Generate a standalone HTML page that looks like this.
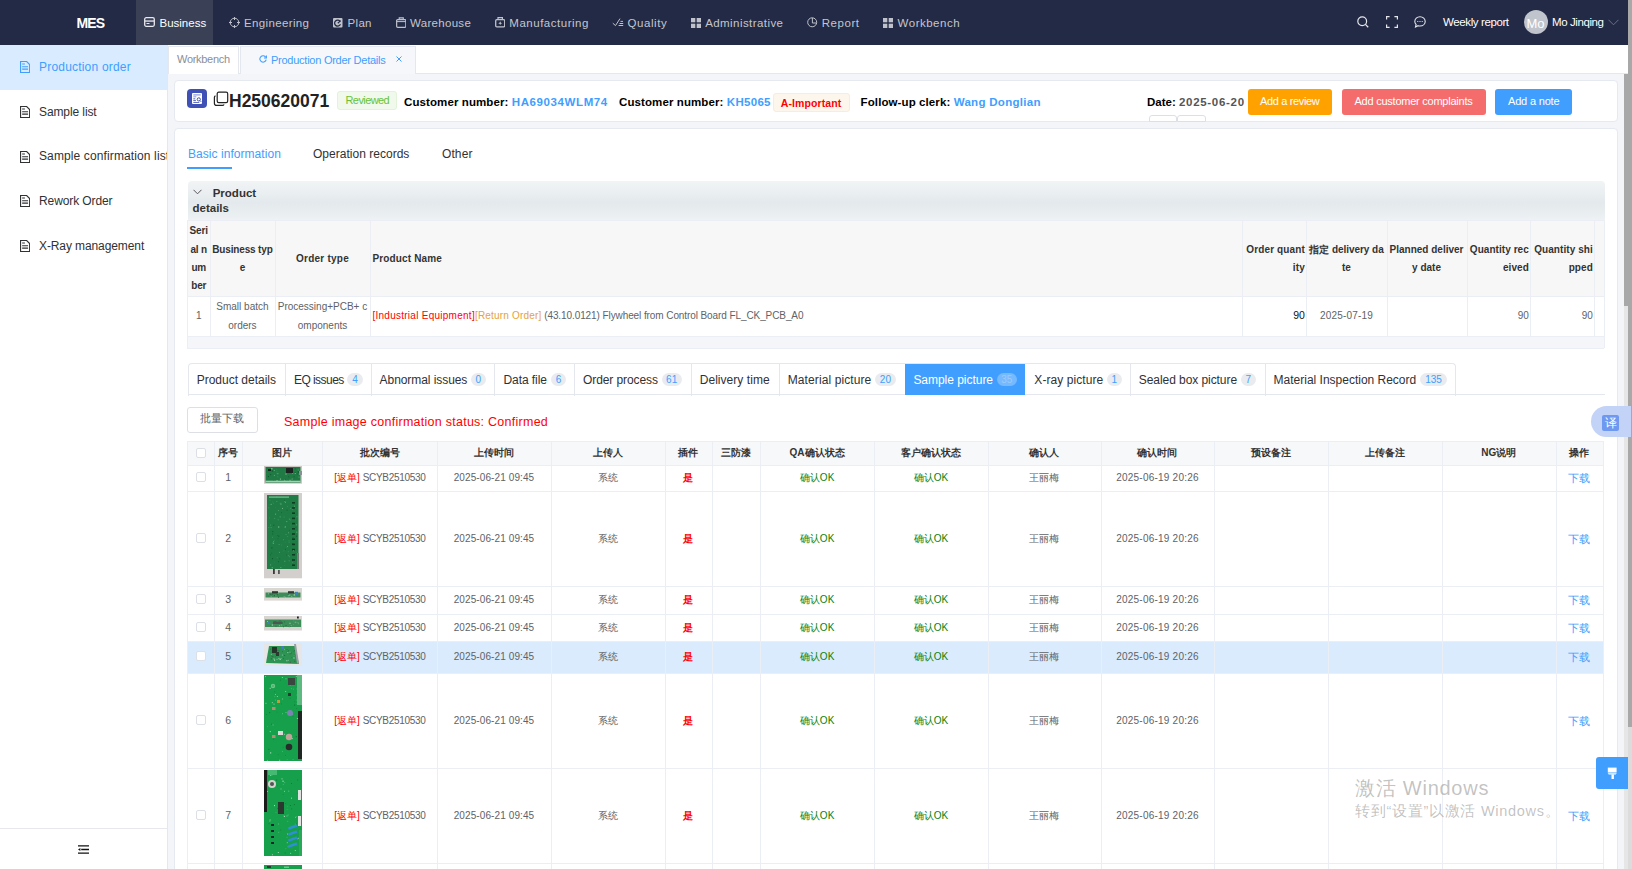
<!DOCTYPE html>
<html><head><meta charset="utf-8">
<style>
*{box-sizing:border-box;margin:0;padding:0}
html,body{width:1632px;height:869px;overflow:hidden;background:#f4f5f8;font-family:"Liberation Sans",sans-serif;color:#303133}
.abs{position:absolute}
.t{position:absolute;white-space:nowrap;line-height:1}
.nav{position:absolute;left:0;top:0;width:1628px;height:45px;background:#232a45}
.nt{position:absolute;top:17.5px;white-space:nowrap;line-height:1;font-size:11.5px;color:#c3c6ce}
.ni{position:absolute;top:17px}
.side{position:absolute;left:0;top:45px;width:168px;height:824px;background:#fff;border-right:1px solid #e4e7ed}
.mi{position:absolute;left:0;width:167px;height:45px;color:#303133;overflow:hidden}
.mi .t{left:39px;top:15.5px;font-size:12px;letter-spacing:-0.1px}
.mi svg{position:absolute;left:20px;top:16px}
.card{position:absolute;background:#fff;border:1px solid #e6e9ef;border-radius:4px}
.blue{color:#409eff}
.b{font-weight:bold}
</style></head><body>

<!-- NAVBAR -->
<div class="nav">
  <div class="abs" style="left:136px;top:0;width:77px;height:45px;background:#3a4157"></div>
  <div class="t" style="left:76.5px;top:16px;font-size:14px;font-weight:bold;color:#fff;letter-spacing:-0.9px">MES</div>
  <!-- Business -->
  <svg class="ni" style="left:144px;top:17px" width="11" height="10" viewBox="0 0 11 10"><rect x="0.7" y="0.7" width="9.6" height="8.6" rx="1.5" fill="none" stroke="#e8e9ee" stroke-width="1.3"/><rect x="1" y="3.4" width="9" height="1.3" fill="#e8e9ee"/><rect x="2.5" y="6" width="3" height="1" fill="#e8e9ee"/></svg>
  <div class="nt" style="left:159.5px;color:#fff;letter-spacing:0px">Business</div>
  <!-- Engineering -->
  <svg class="ni" style="left:229px;top:17px" width="11" height="11" viewBox="0 0 11 11"><circle cx="5.5" cy="5.5" r="4.3" fill="none" stroke="#bfc2cb" stroke-width="1"/><path d="M5.5 0v3M5.5 8v3M0 5.5h3M8 5.5h3" stroke="#bfc2cb" stroke-width="1"/></svg>
  <div class="nt" style="left:244px;letter-spacing:0.36px">Engineering</div>
  <!-- Plan -->
  <svg class="ni" style="left:333px;top:17.5px" width="10" height="10" viewBox="0 0 10 10"><rect x="0" y="0" width="9.5" height="9.5" rx="1" fill="#bfc2cb"/><path d="M7.2 3.6A3 3 0 1 0 7.4 6.2" fill="none" stroke="#232a45" stroke-width="1.3"/><path d="M4.8 5.2L7.6 2.6" stroke="#232a45" stroke-width="1.2"/></svg>
  <div class="nt" style="left:347.5px;letter-spacing:0.33px">Plan</div>
  <!-- Warehouse -->
  <svg class="ni" style="left:395.5px;top:17px" width="10.5" height="11" viewBox="0 0 10.5 11"><rect x="0.65" y="2.6" width="9.2" height="7.7" rx="1" fill="none" stroke="#bfc2cb" stroke-width="1.2"/><path d="M3.2 2.6V0.9h4.1v1.7" fill="none" stroke="#bfc2cb" stroke-width="1.1"/><path d="M0.6 4.6h9.3" stroke="#bfc2cb" stroke-width="1"/></svg>
  <div class="nt" style="left:410px;letter-spacing:0.3px">Warehouse</div>
  <!-- Manufacturing -->
  <svg class="ni" style="left:494.5px;top:17px" width="10.5" height="10.5" viewBox="0 0 10.5 10.5"><rect x="0.7" y="2.7" width="9" height="7.1" rx="1" fill="none" stroke="#bfc2cb" stroke-width="1.3"/><path d="M3 2.6V0.7h4.4v1.9" fill="none" stroke="#bfc2cb" stroke-width="1.2"/><path d="M5.2 4.3L5.9 5.7L7.2 6.2L5.9 6.7L5.2 8.1L4.5 6.7L3.2 6.2L4.5 5.7Z" fill="#bfc2cb"/></svg>
  <div class="nt" style="left:509.3px;letter-spacing:0.52px">Manufacturing</div>
  <!-- Quality -->
  <svg class="ni" style="left:611.5px;top:18px" width="17" height="10" viewBox="0 0 17 10"><path d="M0.8 5.2L3.5 7.6L8 0.6" fill="none" stroke="#bfc2cb" stroke-width="1"/><path d="M8.5 3.4h2.5M7.5 5.5h3.7M6.6 7.5h4.6" stroke="#bfc2cb" stroke-width="1"/></svg>
  <div class="nt" style="left:627.5px;letter-spacing:0.57px">Quality</div>
  <!-- Administrative -->
  <svg class="ni" style="left:691px;top:18px" width="10" height="10" viewBox="0 0 10 10"><rect x="0" y="0" width="4.3" height="4.3" fill="#bfc2cb"/><rect x="5.7" y="0" width="4.3" height="4.3" fill="#bfc2cb"/><rect x="0" y="5.7" width="4.3" height="4.3" fill="#bfc2cb"/><rect x="5.7" y="5.7" width="4.3" height="4.3" fill="#bfc2cb"/></svg>
  <div class="nt" style="left:705.2px;letter-spacing:0.43px">Administrative</div>
  <!-- Report -->
  <svg class="ni" style="left:806.5px;top:17px" width="11" height="11" viewBox="0 0 11 11"><circle cx="5.2" cy="5.3" r="4.5" fill="none" stroke="#bfc2cb" stroke-width="1"/><path d="M5.4 1v5h4" fill="none" stroke="#bfc2cb" stroke-width="1"/></svg>
  <div class="nt" style="left:821.7px;letter-spacing:0.56px">Report</div>
  <!-- Workbench -->
  <svg class="ni" style="left:883px;top:18px" width="10" height="10" viewBox="0 0 10 10"><rect x="0" y="0" width="4.3" height="4.3" fill="#bfc2cb"/><rect x="5.7" y="0" width="4.3" height="4.3" fill="#bfc2cb"/><rect x="0" y="5.7" width="4.3" height="4.3" fill="#bfc2cb"/><rect x="5.7" y="5.7" width="4.3" height="4.3" fill="#bfc2cb"/></svg>
  <div class="nt" style="left:897.6px;letter-spacing:0.5px">Workbench</div>

  <!-- right -->
  <svg class="ni" style="left:1357px;top:16px" width="12" height="12" viewBox="0 0 12 12"><circle cx="5.2" cy="5.2" r="4.4" fill="none" stroke="#e6e7ec" stroke-width="1.2"/><path d="M8.4 8.4L11.2 11.2" stroke="#e6e7ec" stroke-width="1.3"/></svg>
  <svg class="ni" style="left:1385.5px;top:16px" width="12" height="12" viewBox="0 0 12 12"><path d="M0.6 3.5V0.6h3M8.4 0.6h3v2.9M11.4 8.5v2.9h-3M3.6 11.4h-3V8.5" fill="none" stroke="#e6e7ec" stroke-width="1.2"/></svg>
  <svg class="ni" style="left:1414px;top:15.5px" width="12" height="12" viewBox="0 0 12 12"><path d="M6 0.8C3 0.8 0.8 2.9 0.8 5.4c0 1.2 0.5 2.2 1.3 3L1.5 11l2.6-1.3c0.6 0.2 1.2 0.3 1.9 0.3 3 0 5.2-2.1 5.2-4.6S9 0.8 6 0.8z" fill="none" stroke="#e6e7ec" stroke-width="1.1"/><rect x="3.3" y="5" width="1" height="1" fill="#e6e7ec"/><rect x="5.5" y="5" width="1" height="1" fill="#e6e7ec"/><rect x="7.7" y="5" width="1" height="1" fill="#e6e7ec"/></svg>
  <div class="nt" style="top:17px;left:1443px;color:#fff;letter-spacing:-0.39px">Weekly report</div>
  <div class="abs" style="left:1524px;top:10px;width:24px;height:24px;border-radius:50%;background:#c0c4cc"></div>
  <div class="t" style="left:1526.5px;top:16.5px;font-size:13px;color:#fff;letter-spacing:0px">Mo</div>
  <div class="nt" style="top:17px;left:1552px;color:#fff;letter-spacing:-0.4px">Mo Jinqing</div>
  <svg class="ni" style="left:1608px;top:19px" width="11" height="7" viewBox="0 0 11 7"><path d="M0.5 0.8L5.5 5.8L10.5 0.8" fill="none" stroke="#6b7186" stroke-width="1"/></svg>
</div>

<!-- SIDEBAR -->
<div class="side">
  <div class="mi" style="top:0;background:#d9ecff;color:#409eff">
    <svg width="10.2" height="12" viewBox="0 0 11 13"><path d="M0.6 0.6h6.6l3.2 3.2v8.6H0.6z" fill="none" stroke="#409eff" stroke-width="1.2"/><path d="M2.3 3.3h3M2.3 6.3h6.4M2.3 8.8h6.4" stroke="#409eff" stroke-width="1.1"/></svg>
    <div class="t" style="letter-spacing:0.2px">Production order</div></div>
  <div class="mi" style="top:45px">
    <svg width="10.2" height="12" viewBox="0 0 11 13"><path d="M0.6 0.6h6.6l3.2 3.2v8.6H0.6z" fill="none" stroke="#303133" stroke-width="1.2"/><path d="M2.3 3.3h3M2.3 6.3h6.4M2.3 8.8h6.4" stroke="#303133" stroke-width="1.1"/></svg>
    <div class="t">Sample list</div></div>
  <div class="mi" style="top:89.5px">
    <svg width="10.2" height="12" viewBox="0 0 11 13"><path d="M0.6 0.6h6.6l3.2 3.2v8.6H0.6z" fill="none" stroke="#303133" stroke-width="1.2"/><path d="M2.3 3.3h3M2.3 6.3h6.4M2.3 8.8h6.4" stroke="#303133" stroke-width="1.1"/></svg>
    <div class="t" style="letter-spacing:0.12px">Sample confirmation list</div></div>
  <div class="mi" style="top:134px">
    <svg width="10.2" height="12" viewBox="0 0 11 13"><path d="M0.6 0.6h6.6l3.2 3.2v8.6H0.6z" fill="none" stroke="#303133" stroke-width="1.2"/><path d="M2.3 3.3h3M2.3 6.3h6.4M2.3 8.8h6.4" stroke="#303133" stroke-width="1.1"/></svg>
    <div class="t">Rework Order</div></div>
  <div class="mi" style="top:179px">
    <svg width="10.2" height="12" viewBox="0 0 11 13"><path d="M0.6 0.6h6.6l3.2 3.2v8.6H0.6z" fill="none" stroke="#303133" stroke-width="1.2"/><path d="M2.3 3.3h3M2.3 6.3h6.4M2.3 8.8h6.4" stroke="#303133" stroke-width="1.1"/></svg>
    <div class="t">X-Ray management</div></div>
  <div class="abs" style="left:0;top:783px;width:167px;height:1px;background:#e6e8ee"></div>
  <svg class="abs" style="left:78px;top:800px" width="11" height="9" viewBox="0 0 11 9"><path d="M0 0.8h11M3.2 4.5h7.8M0 8.2h11" stroke="#111" stroke-width="1.3"/><path d="M0 4.5L2.4 3v3z" fill="#111"/></svg>
</div>
<!-- TAB STRIP -->
<div class="abs" style="left:168px;top:45px;width:1460px;height:29px;background:#fff;border-bottom:1px solid #e4e7ed"></div>
<div class="abs" style="left:168px;top:46px;width:71px;height:28px;background:#fff;border:1px solid #e4e7ed;border-bottom:none"></div>
<div class="t" style="left:177px;top:54px;font-size:11px;color:#8a8e99;letter-spacing:-0.3px">Workbench</div>
<div class="abs" style="left:240px;top:46px;width:176px;height:28px;background:#f5f7fa;border:1px solid #e4e7ed;border-bottom:none"></div>
<svg class="abs" style="left:259px;top:55px" width="8" height="8" viewBox="0 0 8 8"><path d="M6.8 2.3A3.2 3.2 0 1 0 7.2 4.6" fill="none" stroke="#409eff" stroke-width="1.1"/><path d="M7.4 0.6v2.4H5" fill="none" stroke="#409eff" stroke-width="1.1"/></svg>
<div class="t blue" style="left:271px;top:55px;font-size:11px;letter-spacing:-0.25px">Production Order Details</div>
<svg class="abs" style="left:396px;top:56px" width="6" height="6" viewBox="0 0 6 6"><path d="M0.5 0.5l5 5M5.5 0.5l-5 5" stroke="#409eff" stroke-width="1"/></svg>

<!-- HEADER CARD -->
<div class="card" style="left:174px;top:80px;width:1444px;height:42px"></div>
<div class="abs" style="left:187px;top:89px;width:20px;height:19px;background:#3f51b5;border-radius:4px"></div>
<svg class="abs" style="left:192px;top:93px" width="10" height="11" viewBox="0 0 10 11"><rect x="0" y="0" width="10" height="11" rx="1" fill="#fff"/><rect x="1.3" y="1.3" width="7.4" height="1.2" fill="#8f9ad6"/><rect x="1.3" y="3.4" width="3" height="0.9" fill="#7c88cf"/><rect x="1.3" y="5.4" width="2" height="0.9" fill="#3f51b5"/><rect x="1.3" y="7.2" width="2.6" height="0.9" fill="#3f51b5"/><rect x="1.3" y="9" width="6" height="0.8" fill="#3f51b5"/><circle cx="6.8" cy="6.4" r="1.6" fill="none" stroke="#3f51b5" stroke-width="1"/><path d="M8 7.6l1.2 1.2" stroke="#3f51b5" stroke-width="1"/></svg>
<svg class="abs" style="left:213px;top:90.7px" width="16" height="16" viewBox="0 0 16 16"><rect x="4.2" y="1.2" width="10.5" height="10.5" rx="1.6" fill="none" stroke="#222" stroke-width="1.2"/><path d="M2.5 4.8C1.8 5 1.4 5.6 1.4 6.4v5.8c0 1.3 0.9 2.2 2.2 2.2h5.8c0.8 0 1.4-0.4 1.6-1.1" fill="none" stroke="#222" stroke-width="1.2"/></svg>
<div class="t b" style="left:229px;top:92.7px;font-size:17.5px;color:#222">H250620071</div>
<div class="abs" style="left:337px;top:91px;width:60px;height:18.5px;background:#f0f9eb;border:1px solid #e1f3d8;border-radius:3px"></div>
<div class="t" style="left:345.5px;top:95px;font-size:11px;color:#67c23a;letter-spacing:-0.58px">Reviewed</div>
<div class="t b" style="left:404px;top:96.5px;font-size:11.5px;color:#000;letter-spacing:0.1px">Customer number: <span class="blue" style="letter-spacing:0.6px">HA69034WLM74</span></div>
<div class="t b" style="left:619px;top:96.5px;font-size:11.5px;color:#000;letter-spacing:0.1px">Customer number: <span class="blue" style="letter-spacing:0.3px">KH5065</span></div>
<div class="abs" style="left:772.5px;top:93.3px;width:77px;height:19px;background:#fdf6ec;border:1px solid #faecd8;border-radius:3px"></div>
<div class="t b" style="left:780.8px;top:97.5px;font-size:10.5px;color:#f00;letter-spacing:0.1px">A-Important</div>
<div class="t b" style="left:860.6px;top:96.5px;font-size:11.5px;color:#000;letter-spacing:0.1px">Follow-up clerk: <span class="blue" style="letter-spacing:0.3px">Wang Donglian</span></div>
<div class="t b" style="left:1147px;top:96.7px;font-size:11.5px;color:#000">Date: <span style="color:#555;letter-spacing:0.7px">2025-06-20</span></div>
<div class="abs" style="left:1148.5px;top:115px;width:28px;height:6.5px;border:1px solid #dcdfe6;border-radius:3px 3px 0 0;background:#fff"></div>
<div class="abs" style="left:1176.5px;top:115px;width:29px;height:6.5px;border:1px solid #dcdfe6;border-radius:3px 3px 0 0;background:#fff"></div>

<div class="abs" style="left:1248px;top:89px;width:84px;height:26px;background:#ffa200;border-radius:3px"></div>
<div class="t" style="left:1260px;top:95.5px;font-size:11px;color:#fff;letter-spacing:-0.35px">Add a review</div>
<div class="abs" style="left:1342px;top:89px;width:144px;height:26px;background:#f56c6c;border-radius:3px"></div>
<div class="t" style="left:1354.5px;top:95.5px;font-size:11px;color:#fff;letter-spacing:-0.24px">Add customer complaints</div>
<div class="abs" style="left:1495px;top:89px;width:77px;height:26px;background:#409eff;border-radius:3px"></div>
<div class="t" style="left:1508px;top:95.5px;font-size:11px;color:#fff;letter-spacing:-0.18px">Add a note</div>

<!-- MAIN CARD -->
<div class="card" style="left:174px;top:128px;width:1444px;height:760px"></div>
<div class="t blue" style="left:188px;top:148px;font-size:12px;letter-spacing:0.05px">Basic information</div>
<div class="abs" style="left:187px;top:167px;width:45px;height:2px;background:#409eff"></div>
<div class="t" style="left:313px;top:148px;font-size:12px;letter-spacing:0.02px">Operation records</div>
<div class="t" style="left:442px;top:148px;font-size:12px;letter-spacing:0.1px">Other</div>

<!-- collapse header -->
<div class="abs" style="left:187.5px;top:181px;width:1417px;height:39px;border-radius:4px 4px 0 0;background:linear-gradient(#f0f4f5 0%,#e9eef0 35%,#e3e9ec 55%,#e9eef1 85%,#eff2f5 100%)"></div>
<svg class="abs" style="left:193px;top:189px" width="9" height="6" viewBox="0 0 9 6"><path d="M0.5 0.8L4.5 4.8L8.5 0.8" fill="none" stroke="#555" stroke-width="1"/></svg>
<div class="t b" style="left:212.7px;top:186px;font-size:11.5px;color:#333;line-height:15px">Product</div>
<div class="t b" style="left:192.5px;top:201px;font-size:11.5px;color:#333;line-height:15px">details</div>
<div class="abs" style="left:187.2px;top:220.2px;width:1417.2px;height:75.80000000000001px;background:#f7f7f8"></div>
<div class="abs" style="left:187.2px;top:296px;width:1417.2px;height:40.19999999999999px;background:#fff"></div>
<div class="abs" style="left:187.2px;top:336.2px;width:1417.2px;height:12.300000000000011px;background:#f5f6f9"></div>
<div class="abs" style="left:187.2px;top:220.2px;width:1417.2px;height:1px;background:#ebeef5"></div>
<div class="abs" style="left:187.2px;top:296px;width:1417.2px;height:1px;background:#ebeef5"></div>
<div class="abs" style="left:187.2px;top:336.2px;width:1417.2px;height:1px;background:#ebeef5"></div>
<div class="abs" style="left:187.2px;top:347.5px;width:1417.2px;height:1px;background:#ebeef5"></div>
<div class="abs" style="left:187.2px;top:220.2px;width:1px;height:116.0px;background:#ebeef5"></div>
<div class="abs" style="left:210.3px;top:220.2px;width:1px;height:116.0px;background:#ebeef5"></div>
<div class="abs" style="left:274.6px;top:220.2px;width:1px;height:116.0px;background:#ebeef5"></div>
<div class="abs" style="left:370.4px;top:220.2px;width:1px;height:116.0px;background:#ebeef5"></div>
<div class="abs" style="left:1242.4px;top:220.2px;width:1px;height:116.0px;background:#ebeef5"></div>
<div class="abs" style="left:1306.4px;top:220.2px;width:1px;height:116.0px;background:#ebeef5"></div>
<div class="abs" style="left:1386.6px;top:220.2px;width:1px;height:116.0px;background:#ebeef5"></div>
<div class="abs" style="left:1466.5px;top:220.2px;width:1px;height:116.0px;background:#ebeef5"></div>
<div class="abs" style="left:1530.3px;top:220.2px;width:1px;height:116.0px;background:#ebeef5"></div>
<div class="abs" style="left:1594.4px;top:220.2px;width:1px;height:116.0px;background:#ebeef5"></div>
<div class="abs" style="left:1604.4px;top:220.2px;width:1px;height:116.0px;background:#ebeef5"></div>
<div class="abs" style="left:187.2px;top:336.2px;width:1px;height:12.300000000000011px;background:#ebeef5"></div>
<div class="abs" style="left:1604.4px;top:336.2px;width:1px;height:12.300000000000011px;background:#ebeef5"></div>
<div class="abs" style="left:187.2px;top:222.4px;width:23.100000000000023px;text-align:center;line-height:18.3px;white-space:nowrap;font-size:10px;font-weight:bold;color:#333;letter-spacing:-0.15px">Seri<br>al n<br>um<br>ber</div>
<div class="abs" style="left:210.3px;top:240.5px;width:64.30000000000001px;text-align:center;line-height:18.5px;white-space:nowrap;font-size:10px;font-weight:bold;color:#333;letter-spacing:-0.15px">Business typ<br>e</div>
<div class="abs" style="left:274.6px;top:249.75px;width:95.79999999999995px;text-align:center;line-height:18.5px;white-space:nowrap;font-size:10px;font-weight:bold;color:#333;letter-spacing:-0.15px;letter-spacing:0.23px">Order type</div>
<div class="abs" style="left:372.4px;top:249.75px;line-height:18.5px;white-space:nowrap;font-size:10px;font-weight:bold;color:#333;letter-spacing:-0.15px;letter-spacing:0.15px">Product Name</div>
<div class="abs" style="left:1242.4px;top:240.5px;width:62.5px;text-align:right;line-height:18.5px;white-space:nowrap;font-size:10px;font-weight:bold;color:#333;letter-spacing:-0.15px;letter-spacing:0.12px">Order quant<br>ity</div>
<div class="abs" style="left:1306.4px;top:240.5px;width:80.19999999999982px;text-align:center;line-height:18.5px;white-space:nowrap;font-size:10px;font-weight:bold;color:#333;letter-spacing:-0.15px;letter-spacing:-0.05px">指定 delivery da<br>te</div>
<div class="abs" style="left:1386.6px;top:240.5px;width:79.90000000000009px;text-align:center;line-height:18.5px;white-space:nowrap;font-size:10px;font-weight:bold;color:#333;letter-spacing:-0.15px;letter-spacing:0px">Planned deliver<br>y date</div>
<div class="abs" style="left:1466.5px;top:240.5px;width:62.299999999999955px;text-align:right;line-height:18.5px;white-space:nowrap;font-size:10px;font-weight:bold;color:#333;letter-spacing:-0.15px;letter-spacing:0.05px">Quantity rec<br>eived</div>
<div class="abs" style="left:1530.3px;top:240.5px;width:62.600000000000136px;text-align:right;line-height:18.5px;white-space:nowrap;font-size:10px;font-weight:bold;color:#333;letter-spacing:-0.15px;letter-spacing:0.08px">Quantity shi<br>pped</div>
<div class="abs" style="left:187.2px;top:306.75px;width:23.100000000000023px;text-align:center;line-height:18.5px;white-space:nowrap;font-size:10px;color:#606266">1</div>
<div class="abs" style="left:210.3px;top:296.7px;width:64.30000000000001px;text-align:center;line-height:19.3px;white-space:nowrap;font-size:10px;color:#606266">Small batch<br>orders</div>
<div class="abs" style="left:274.6px;top:296.7px;width:95.79999999999995px;text-align:center;line-height:19.3px;white-space:nowrap;font-size:10px;color:#606266">Processing+PCB+ c<br>omponents</div>
<div class="abs" style="left:372.4px;top:306.75px;line-height:18.5px;white-space:nowrap;font-size:10px;color:#606266"><span style="color:#f00;letter-spacing:0.265px">[Industrial Equipment]</span><span style="color:#e6a23c;letter-spacing:0.18px">[Return Order]</span> <span style="letter-spacing:-0.09px">(43.10.0121) Flywheel from Control Board FL_CK_PCB_A0</span></div>
<div class="abs" style="left:1242.4px;top:305.95px;width:62.5px;text-align:right;line-height:18.5px;white-space:nowrap;font-size:10.5px;color:#111">90</div>
<div class="abs" style="left:1306.4px;top:306.75px;width:80.19999999999982px;text-align:center;line-height:18.5px;white-space:nowrap;font-size:10px;color:#606266;letter-spacing:0.2px">2025-07-19</div>
<div class="abs" style="left:1466.5px;top:306.75px;width:62.299999999999955px;text-align:right;line-height:18.5px;white-space:nowrap;font-size:10px;color:#606266">90</div>
<div class="abs" style="left:1530.3px;top:306.75px;width:62.600000000000136px;text-align:right;line-height:18.5px;white-space:nowrap;font-size:10px;color:#606266">90</div>
<div class="abs" style="left:187.5px;top:363.2px;width:1268px;height:32.400000000000034px;border:1px solid #e4e7ed;border-bottom:none;border-radius:4px 4px 0 0;background:#fff"></div>
<div class="abs" style="left:187.5px;top:394px;width:1417px;height:1px;background:#e4e7ed"></div>
<div class="t" style="left:196.7px;top:374px;font-size:12px;color:#303133;letter-spacing:-0.006px">Product details</div>
<div class="abs" style="left:285.3px;top:363.2px;width:1px;height:32.900000000000034px;background:#e4e7ed"></div>
<div class="t" style="left:294px;top:374px;font-size:12px;color:#303133;letter-spacing:-0.555px">EQ issues</div>
<div class="abs" style="left:347.3px;top:372.8px;width:15.399999999999977px;height:13px;border-radius:7px;background:#e9ebef"></div>
<div class="abs" style="left:347.3px;top:372.8px;width:15.399999999999977px;height:13px;line-height:13px;text-align:center;font-size:10px;color:#409eff">4</div>
<div class="abs" style="left:371.4px;top:363.2px;width:1px;height:32.900000000000034px;background:#e4e7ed"></div>
<div class="t" style="left:379.6px;top:374px;font-size:12px;color:#303133;letter-spacing:-0.068px">Abnormal issues</div>
<div class="abs" style="left:471px;top:372.8px;width:14.5px;height:13px;border-radius:7px;background:#e9ebef"></div>
<div class="abs" style="left:471px;top:372.8px;width:14.5px;height:13px;line-height:13px;text-align:center;font-size:10px;color:#409eff">0</div>
<div class="abs" style="left:494.4px;top:363.2px;width:1px;height:32.900000000000034px;background:#e4e7ed"></div>
<div class="t" style="left:503.4px;top:374px;font-size:12px;color:#303133;letter-spacing:-0.048px">Data file</div>
<div class="abs" style="left:551px;top:372.8px;width:15px;height:13px;border-radius:7px;background:#e9ebef"></div>
<div class="abs" style="left:551px;top:372.8px;width:15px;height:13px;line-height:13px;text-align:center;font-size:10px;color:#409eff">6</div>
<div class="abs" style="left:574.4px;top:363.2px;width:1px;height:32.900000000000034px;background:#e4e7ed"></div>
<div class="t" style="left:583px;top:374px;font-size:12px;color:#303133;letter-spacing:-0.095px">Order process</div>
<div class="abs" style="left:661.6px;top:372.8px;width:20.100000000000023px;height:13px;border-radius:7px;background:#e9ebef"></div>
<div class="abs" style="left:661.6px;top:372.8px;width:20.100000000000023px;height:13px;line-height:13px;text-align:center;font-size:10px;color:#409eff">61</div>
<div class="abs" style="left:690.5px;top:363.2px;width:1px;height:32.900000000000034px;background:#e4e7ed"></div>
<div class="t" style="left:699.7px;top:374px;font-size:12px;color:#303133;letter-spacing:0.049px">Delivery time</div>
<div class="abs" style="left:778.5px;top:363.2px;width:1px;height:32.900000000000034px;background:#e4e7ed"></div>
<div class="t" style="left:787.7px;top:374px;font-size:12px;color:#303133;letter-spacing:0.104px">Material picture</div>
<div class="abs" style="left:875px;top:372.8px;width:20.799999999999955px;height:13px;border-radius:7px;background:#e9ebef"></div>
<div class="abs" style="left:875px;top:372.8px;width:20.799999999999955px;height:13px;line-height:13px;text-align:center;font-size:10px;color:#409eff">20</div>
<div class="abs" style="left:905.1px;top:364.0px;width:119.89999999999995px;height:31.000000000000036px;background:#409eff"></div>
<div class="t" style="left:913.4px;top:374px;font-size:12px;color:#fff;letter-spacing:-0.032px">Sample picture</div>
<div class="abs" style="left:996.5px;top:372.8px;width:20.5px;height:13px;border-radius:7px;background:rgba(255,255,255,0.28)"></div>
<div class="abs" style="left:996.5px;top:372.8px;width:20.5px;height:13px;line-height:13px;text-align:center;font-size:10px;color:#9ccbfc">35</div>
<div class="t" style="left:1034.3px;top:374px;font-size:12px;color:#303133;letter-spacing:0.075px">X-ray picture</div>
<div class="abs" style="left:1107px;top:372.8px;width:14.799999999999955px;height:13px;border-radius:7px;background:#e9ebef"></div>
<div class="abs" style="left:1107px;top:372.8px;width:14.799999999999955px;height:13px;line-height:13px;text-align:center;font-size:10px;color:#409eff">1</div>
<div class="abs" style="left:1130.3px;top:363.2px;width:1px;height:32.900000000000034px;background:#e4e7ed"></div>
<div class="t" style="left:1138.8px;top:374px;font-size:12px;color:#303133;letter-spacing:-0.067px">Sealed box picture</div>
<div class="abs" style="left:1241px;top:372.8px;width:14.599999999999909px;height:13px;border-radius:7px;background:#e9ebef"></div>
<div class="abs" style="left:1241px;top:372.8px;width:14.599999999999909px;height:13px;line-height:13px;text-align:center;font-size:10px;color:#409eff">7</div>
<div class="abs" style="left:1264.5px;top:363.2px;width:1px;height:32.900000000000034px;background:#e4e7ed"></div>
<div class="t" style="left:1273.6px;top:374px;font-size:12px;color:#303133;letter-spacing:-0.005px">Material Inspection Record</div>
<div class="abs" style="left:1420.4px;top:372.8px;width:26.199999999999818px;height:13px;border-radius:7px;background:#e9ebef"></div>
<div class="abs" style="left:1420.4px;top:372.8px;width:26.199999999999818px;height:13px;line-height:13px;text-align:center;font-size:10px;color:#409eff">135</div>
<div class="abs" style="left:187px;top:407px;width:71px;height:26px;border:1px solid #dcdfe6;border-radius:3px;background:#fff"></div>
<div class="t" style="left:200px;top:413.2px;font-size:11.3px;color:#606266">批量下载</div>
<div class="t" style="left:284px;top:415.5px;font-size:12.5px;color:#f00;letter-spacing:0.26px">Sample image confirmation status: Confirmed</div>
<div class="abs" style="left:187.2px;top:441px;width:1415.8px;height:23.5px;background:#f7f8fa"></div>
<div class="abs" style="left:187.2px;top:641px;width:1415.8px;height:32.200000000000045px;background:#d9ebfd"></div>
<div class="abs" style="left:187.2px;top:441px;width:1415.8px;height:1px;background:#ebeef5"></div>
<div class="abs" style="left:187.2px;top:464.5px;width:1415.8px;height:1px;background:#ebeef5"></div>
<div class="abs" style="left:187.2px;top:491px;width:1415.8px;height:1px;background:#ebeef5"></div>
<div class="abs" style="left:187.2px;top:586px;width:1415.8px;height:1px;background:#ebeef5"></div>
<div class="abs" style="left:187.2px;top:614px;width:1415.8px;height:1px;background:#ebeef5"></div>
<div class="abs" style="left:187.2px;top:641px;width:1415.8px;height:1px;background:#ebeef5"></div>
<div class="abs" style="left:187.2px;top:673.2px;width:1415.8px;height:1px;background:#ebeef5"></div>
<div class="abs" style="left:187.2px;top:768.2px;width:1415.8px;height:1px;background:#ebeef5"></div>
<div class="abs" style="left:187.2px;top:863.2px;width:1415.8px;height:1px;background:#ebeef5"></div>
<div class="abs" style="left:187.2px;top:441px;width:1px;height:428px;background:#ebeef5"></div>
<div class="abs" style="left:214.3px;top:441px;width:1px;height:428px;background:#ebeef5"></div>
<div class="abs" style="left:242.2px;top:441px;width:1px;height:428px;background:#ebeef5"></div>
<div class="abs" style="left:322.4px;top:441px;width:1px;height:428px;background:#ebeef5"></div>
<div class="abs" style="left:437.4px;top:441px;width:1px;height:428px;background:#ebeef5"></div>
<div class="abs" style="left:550.6px;top:441px;width:1px;height:428px;background:#ebeef5"></div>
<div class="abs" style="left:664.6px;top:441px;width:1px;height:428px;background:#ebeef5"></div>
<div class="abs" style="left:712.4px;top:441px;width:1px;height:428px;background:#ebeef5"></div>
<div class="abs" style="left:760.1px;top:441px;width:1px;height:428px;background:#ebeef5"></div>
<div class="abs" style="left:874.1px;top:441px;width:1px;height:428px;background:#ebeef5"></div>
<div class="abs" style="left:987.7px;top:441px;width:1px;height:428px;background:#ebeef5"></div>
<div class="abs" style="left:1100.9px;top:441px;width:1px;height:428px;background:#ebeef5"></div>
<div class="abs" style="left:1214.1px;top:441px;width:1px;height:428px;background:#ebeef5"></div>
<div class="abs" style="left:1328px;top:441px;width:1px;height:428px;background:#ebeef5"></div>
<div class="abs" style="left:1442px;top:441px;width:1px;height:428px;background:#ebeef5"></div>
<div class="abs" style="left:1555.7px;top:441px;width:1px;height:428px;background:#ebeef5"></div>
<div class="abs" style="left:1603px;top:441px;width:1px;height:428px;background:#ebeef5"></div>
<div class="abs" style="left:196px;top:447.8px;width:10px;height:10px;border:1px solid #dcdfe6;border-radius:2px;background:#fff"></div>
<div class="abs" style="left:214.3px;top:445.5px;width:27.899999999999977px;height:14px;line-height:14px;text-align:center;white-space:nowrap;font-size:10px;font-weight:bold;color:#333">序号</div>
<div class="abs" style="left:242.2px;top:445.5px;width:80.19999999999999px;height:14px;line-height:14px;text-align:center;white-space:nowrap;font-size:10px;font-weight:bold;color:#333">图片</div>
<div class="abs" style="left:322.4px;top:445.5px;width:115.0px;height:14px;line-height:14px;text-align:center;white-space:nowrap;font-size:10px;font-weight:bold;color:#333">批次编号</div>
<div class="abs" style="left:437.4px;top:445.5px;width:113.20000000000005px;height:14px;line-height:14px;text-align:center;white-space:nowrap;font-size:10px;font-weight:bold;color:#333">上传时间</div>
<div class="abs" style="left:550.6px;top:445.5px;width:114.0px;height:14px;line-height:14px;text-align:center;white-space:nowrap;font-size:10px;font-weight:bold;color:#333">上传人</div>
<div class="abs" style="left:664.6px;top:445.5px;width:47.799999999999955px;height:14px;line-height:14px;text-align:center;white-space:nowrap;font-size:10px;font-weight:bold;color:#333">插件</div>
<div class="abs" style="left:712.4px;top:445.5px;width:47.700000000000045px;height:14px;line-height:14px;text-align:center;white-space:nowrap;font-size:10px;font-weight:bold;color:#333">三防漆</div>
<div class="abs" style="left:760.1px;top:445.5px;width:114.0px;height:14px;line-height:14px;text-align:center;white-space:nowrap;font-size:10px;font-weight:bold;color:#333">QA确认状态</div>
<div class="abs" style="left:874.1px;top:445.5px;width:113.60000000000002px;height:14px;line-height:14px;text-align:center;white-space:nowrap;font-size:10px;font-weight:bold;color:#333">客户确认状态</div>
<div class="abs" style="left:987.7px;top:445.5px;width:113.20000000000005px;height:14px;line-height:14px;text-align:center;white-space:nowrap;font-size:10px;font-weight:bold;color:#333">确认人</div>
<div class="abs" style="left:1100.9px;top:445.5px;width:113.19999999999982px;height:14px;line-height:14px;text-align:center;white-space:nowrap;font-size:10px;font-weight:bold;color:#333">确认时间</div>
<div class="abs" style="left:1214.1px;top:445.5px;width:113.90000000000009px;height:14px;line-height:14px;text-align:center;white-space:nowrap;font-size:10px;font-weight:bold;color:#333">预设备注</div>
<div class="abs" style="left:1328px;top:445.5px;width:114px;height:14px;line-height:14px;text-align:center;white-space:nowrap;font-size:10px;font-weight:bold;color:#333">上传备注</div>
<div class="abs" style="left:1442px;top:445.5px;width:113.70000000000005px;height:14px;line-height:14px;text-align:center;white-space:nowrap;font-size:10px;font-weight:bold;color:#333">NG说明</div>
<div class="abs" style="left:1555.7px;top:445.5px;width:47.299999999999955px;height:14px;line-height:14px;text-align:center;white-space:nowrap;font-size:10px;font-weight:bold;color:#333">操作</div>
<svg class="abs" style="left:264px;top:466.2px" width="38" height="17.7" viewBox="0 0 38 17.7"><rect width="38" height="17.7" fill="#cdc8c4"/><rect x="1.5" y="1" width="35" height="15.7" fill="#1f7a44"/><rect x="9.9" y="8.9" width="0.9" height="1.1" fill="#5fae7a"/><rect x="22.0" y="13.5" width="1.0" height="1.0" fill="#2f8f55"/><rect x="34.9" y="8.0" width="1.3" height="1.0" fill="#2f8f55"/><rect x="9.7" y="3.9" width="1.3" height="0.9" fill="#5fae7a"/><rect x="24.2" y="2.8" width="1.2" height="1.1" fill="#0f5a2e"/><rect x="27.7" y="12.5" width="0.8" height="1.1" fill="#8cc49e"/><rect x="25.6" y="13.7" width="0.9" height="1.2" fill="#8cc49e"/><rect x="33.8" y="3.7" width="0.9" height="0.6" fill="#8cc49e"/><rect x="9.2" y="14.3" width="0.9" height="1.1" fill="#0f5a2e"/><rect x="15.9" y="12.6" width="1.1" height="1.0" fill="#8cc49e"/><rect x="21.3" y="13.5" width="1.1" height="1.3" fill="#0f5a2e"/><rect x="34.7" y="10.5" width="0.7" height="1.3" fill="#5fae7a"/><rect x="25.6" y="4.7" width="1.3" height="1.1" fill="#0f5a2e"/><rect x="6.1" y="8.1" width="1.1" height="1.0" fill="#0f5a2e"/><rect x="28.4" y="7.2" width="0.7" height="0.8" fill="#8cc49e"/><rect x="30.8" y="2.6" width="1.1" height="0.6" fill="#0f5a2e"/><rect x="20.2" y="13.7" width="0.8" height="0.8" fill="#5fae7a"/><rect x="12.2" y="3.0" width="1.1" height="0.6" fill="#2f8f55"/><rect x="34.1" y="5.7" width="0.8" height="1.2" fill="#0f5a2e"/><rect x="12.4" y="14.2" width="1.3" height="0.9" fill="#8cc49e"/><rect x="30.7" y="6.9" width="1.3" height="1.1" fill="#5fae7a"/><rect x="22.5" y="13.9" width="1.0" height="0.9" fill="#2f8f55"/><rect x="32.9" y="7.6" width="0.8" height="0.8" fill="#0f5a2e"/><rect x="2.4" y="7.3" width="1.1" height="0.6" fill="#2f8f55"/><rect x="4.0" y="10.0" width="1.0" height="1.1" fill="#0f5a2e"/><rect x="22.1" y="5.5" width="1.0" height="1.1" fill="#5fae7a"/><rect x="33.8" y="5.2" width="1.0" height="1.1" fill="#0f5a2e"/><rect x="7.9" y="4.4" width="1.2" height="1.3" fill="#0f5a2e"/><rect x="11.9" y="6.8" width="1.2" height="0.6" fill="#2f8f55"/><rect x="12.2" y="4.8" width="1.2" height="0.8" fill="#2f8f55"/><rect x="24.4" y="10.2" width="0.7" height="1.1" fill="#0f5a2e"/><rect x="24.3" y="4.9" width="1.2" height="1.4" fill="#5fae7a"/><rect x="13.1" y="10.3" width="1.3" height="1.0" fill="#2f8f55"/><rect x="28.0" y="2.4" width="1.4" height="0.9" fill="#2f8f55"/><rect x="30.5" y="6.3" width="1.3" height="0.7" fill="#0f5a2e"/><rect x="21.5" y="7.4" width="1.0" height="1.3" fill="#8cc49e"/><rect x="13.4" y="7.3" width="0.9" height="0.9" fill="#8cc49e"/><rect x="7.1" y="2.1" width="1.4" height="1.3" fill="#8cc49e"/><rect x="20.4" y="14.5" width="1.2" height="0.6" fill="#8cc49e"/><rect x="29.6" y="10.4" width="1.0" height="0.8" fill="#0f5a2e"/><rect x="1.5" y="14.7" width="35" height="1.6" fill="#a9cdb3"/><rect x="22" y="2" width="7" height="5" fill="#1b2420"/><rect x="35" y="5" width="3" height="4" fill="#8a8f96"/><rect x="4" y="3" width="3" height="2" fill="#10261a"/></svg>
<div class="abs" style="left:196px;top:472.0px;width:10px;height:10px;border:1px solid #dcdfe6;border-radius:2px;background:#fff"></div>
<div class="abs" style="left:214.3px;top:469.5px;width:27.899999999999977px;height:14px;line-height:14px;text-align:center;white-space:nowrap;font-size:10.5px;color:#606266">1</div>
<div class="abs" style="left:322.4px;top:470.5px;width:115.0px;height:14px;line-height:14px;text-align:center;white-space:nowrap;font-size:10px;color:#606266"><span style="color:#f00">[返单]</span> <span style="letter-spacing:-0.3px">SCYB2510530</span></div>
<div class="abs" style="left:437.4px;top:470.5px;width:113.20000000000005px;height:14px;line-height:14px;text-align:center;white-space:nowrap;font-size:10px;color:#606266;letter-spacing:0.1px">2025-06-21 09:45</div>
<div class="abs" style="left:550.6px;top:470.5px;width:114.0px;height:14px;line-height:14px;text-align:center;white-space:nowrap;font-size:10px;color:#606266">系统</div>
<div class="abs" style="left:664.6px;top:470.5px;width:47.799999999999955px;height:14px;line-height:14px;text-align:center;white-space:nowrap;font-size:10px;color:#f00;font-weight:bold">是</div>
<div class="abs" style="left:760.1px;top:470.5px;width:114.0px;height:14px;line-height:14px;text-align:center;white-space:nowrap;font-size:10px;color:#0a820a">确认OK</div>
<div class="abs" style="left:874.1px;top:470.5px;width:113.60000000000002px;height:14px;line-height:14px;text-align:center;white-space:nowrap;font-size:10px;color:#0a820a">确认OK</div>
<div class="abs" style="left:987.7px;top:470.5px;width:113.20000000000005px;height:14px;line-height:14px;text-align:center;white-space:nowrap;font-size:10px;color:#606266">王丽梅</div>
<div class="abs" style="left:1100.9px;top:470.5px;width:113.19999999999982px;height:14px;line-height:14px;text-align:center;white-space:nowrap;font-size:10px;color:#606266;letter-spacing:0.23px">2025-06-19 20:26</div>
<div class="abs" style="left:1555.7px;top:470.5px;width:47.299999999999955px;height:14px;line-height:14px;text-align:center;white-space:nowrap;font-size:11px;color:#409eff">下载</div>
<svg class="abs" style="left:264px;top:493.3px" width="38" height="85.3" viewBox="0 0 38 85.3"><rect width="38" height="85.3" fill="#d3cfcc"/><rect x="3" y="2" width="31.5" height="74" fill="#1e7c44"/><rect x="20.6" y="33.9" width="0.8" height="0.6" fill="#7fbf95"/><rect x="27.9" y="50.1" width="0.6" height="0.8" fill="#0e5a2d"/><rect x="6.2" y="71.6" width="0.9" height="0.7" fill="#7fbf95"/><rect x="28.9" y="46.4" width="0.7" height="0.7" fill="#0e5a2d"/><rect x="17.2" y="52.4" width="0.9" height="0.6" fill="#2d8d52"/><rect x="32.1" y="47.2" width="0.5" height="0.5" fill="#2d8d52"/><rect x="9.7" y="68.5" width="0.8" height="1.0" fill="#2d8d52"/><rect x="13.1" y="42.5" width="0.8" height="0.5" fill="#0e5a2d"/><rect x="28.5" y="14.3" width="0.6" height="0.7" fill="#4aa06a"/><rect x="4.9" y="24.7" width="0.9" height="0.5" fill="#4aa06a"/><rect x="8.3" y="43.8" width="0.7" height="0.9" fill="#4aa06a"/><rect x="32.0" y="58.7" width="0.8" height="1.1" fill="#2d8d52"/><rect x="31.5" y="34.2" width="0.7" height="0.6" fill="#0e5a2d"/><rect x="8.2" y="40.6" width="1.0" height="0.7" fill="#0e5a2d"/><rect x="8.8" y="49.7" width="1.0" height="1.0" fill="#7fbf95"/><rect x="26.4" y="26.6" width="0.6" height="0.8" fill="#4aa06a"/><rect x="13.6" y="26.0" width="0.5" height="0.8" fill="#2d8d52"/><rect x="15.3" y="65.6" width="0.9" height="0.6" fill="#0e5a2d"/><rect x="19.1" y="46.4" width="0.5" height="0.8" fill="#7fbf95"/><rect x="30.0" y="12.8" width="0.8" height="0.7" fill="#7fbf95"/><rect x="18.2" y="14.9" width="0.8" height="1.1" fill="#7fbf95"/><rect x="28.0" y="65.8" width="0.8" height="0.5" fill="#0e5a2d"/><rect x="6.7" y="10.8" width="0.8" height="1.1" fill="#7fbf95"/><rect x="8.0" y="65.1" width="1.0" height="1.1" fill="#0e5a2d"/><rect x="25.1" y="67.7" width="0.9" height="0.8" fill="#2d8d52"/><rect x="25.4" y="26.3" width="0.5" height="0.6" fill="#7fbf95"/><rect x="4.7" y="11.4" width="0.7" height="1.0" fill="#2d8d52"/><rect x="24.8" y="67.0" width="0.5" height="1.0" fill="#4aa06a"/><rect x="32.5" y="23.6" width="0.9" height="0.6" fill="#7fbf95"/><rect x="30.7" y="16.8" width="0.7" height="0.5" fill="#2d8d52"/><rect x="16.4" y="74.0" width="0.9" height="0.7" fill="#7fbf95"/><rect x="29.0" y="57.1" width="1.0" height="0.9" fill="#7fbf95"/><rect x="23.3" y="43.0" width="0.7" height="0.7" fill="#4aa06a"/><rect x="10.1" y="46.9" width="1.0" height="1.0" fill="#2d8d52"/><rect x="6.0" y="33.5" width="0.6" height="0.5" fill="#0e5a2d"/><rect x="14.4" y="33.5" width="0.6" height="0.9" fill="#7fbf95"/><rect x="24.2" y="39.5" width="0.8" height="0.7" fill="#7fbf95"/><rect x="22.5" y="28.1" width="0.7" height="1.0" fill="#7fbf95"/><rect x="21.0" y="9.0" width="0.8" height="0.7" fill="#7fbf95"/><rect x="30.4" y="15.1" width="0.9" height="0.7" fill="#4aa06a"/><rect x="21.3" y="55.8" width="0.7" height="0.9" fill="#0e5a2d"/><rect x="6.1" y="31.6" width="0.7" height="0.9" fill="#2d8d52"/><rect x="8.9" y="9.9" width="1.0" height="1.1" fill="#2d8d52"/><rect x="20.5" y="8.3" width="0.8" height="0.8" fill="#7fbf95"/><rect x="30.5" y="60.9" width="0.9" height="0.7" fill="#0e5a2d"/><rect x="28.6" y="44.3" width="0.8" height="1.0" fill="#0e5a2d"/><rect x="29.2" y="50.3" width="0.8" height="0.5" fill="#0e5a2d"/><rect x="28.9" y="31.6" width="0.9" height="0.6" fill="#2d8d52"/><rect x="7.4" y="59.8" width="0.7" height="0.6" fill="#0e5a2d"/><rect x="6.6" y="34.6" width="1.0" height="0.5" fill="#7fbf95"/><rect x="24.5" y="46.9" width="0.9" height="1.1" fill="#2d8d52"/><rect x="14.3" y="33.5" width="1.0" height="1.1" fill="#7fbf95"/><rect x="15.3" y="10.0" width="0.9" height="0.5" fill="#2d8d52"/><rect x="22.6" y="16.7" width="0.8" height="1.0" fill="#0e5a2d"/><rect x="20.2" y="72.1" width="0.9" height="0.6" fill="#2d8d52"/><rect x="5.4" y="15.7" width="0.9" height="0.7" fill="#2d8d52"/><rect x="12.8" y="64.2" width="0.7" height="1.0" fill="#4aa06a"/><rect x="14.0" y="17.0" width="0.6" height="0.7" fill="#7fbf95"/><rect x="31.3" y="26.6" width="0.5" height="1.0" fill="#2d8d52"/><rect x="20.9" y="33.3" width="0.8" height="1.0" fill="#7fbf95"/><rect x="32.1" y="31.6" width="1.0" height="0.6" fill="#7fbf95"/><rect x="24.9" y="25.4" width="0.7" height="0.9" fill="#4aa06a"/><rect x="14.0" y="68.3" width="0.9" height="0.9" fill="#0e5a2d"/><rect x="4.4" y="14.4" width="0.9" height="0.9" fill="#4aa06a"/><rect x="18.8" y="57.9" width="0.6" height="1.0" fill="#2d8d52"/><rect x="12.3" y="8.0" width="1.0" height="0.9" fill="#4aa06a"/><rect x="6.2" y="61.4" width="0.5" height="1.0" fill="#0e5a2d"/><rect x="28.2" y="15.8" width="0.5" height="0.7" fill="#7fbf95"/><rect x="32.6" y="15.3" width="0.6" height="0.7" fill="#2d8d52"/><rect x="11.2" y="20.7" width="0.9" height="0.9" fill="#7fbf95"/><rect x="29.3" y="57.8" width="0.6" height="0.6" fill="#4aa06a"/><rect x="23.9" y="58.3" width="0.6" height="0.9" fill="#4aa06a"/><rect x="4.4" y="34.2" width="0.9" height="0.9" fill="#4aa06a"/><rect x="20.0" y="6.8" width="0.7" height="0.8" fill="#0e5a2d"/><rect x="9.4" y="31.7" width="0.8" height="1.1" fill="#0e5a2d"/><rect x="23.3" y="13.0" width="0.7" height="0.6" fill="#4aa06a"/><rect x="8.5" y="8.7" width="0.8" height="0.6" fill="#4aa06a"/><rect x="19.6" y="23.7" width="0.9" height="0.7" fill="#4aa06a"/><rect x="20.7" y="48.7" width="1.0" height="0.8" fill="#2d8d52"/><rect x="24.7" y="48.6" width="0.9" height="0.9" fill="#4aa06a"/><rect x="10.2" y="25.0" width="0.9" height="0.8" fill="#4aa06a"/><rect x="14.8" y="51.2" width="0.6" height="0.7" fill="#7fbf95"/><rect x="9.1" y="48.1" width="0.5" height="0.9" fill="#7fbf95"/><rect x="23.0" y="53.4" width="1.0" height="0.6" fill="#7fbf95"/><rect x="8.5" y="38.3" width="0.7" height="0.8" fill="#0e5a2d"/><rect x="32.5" y="38.6" width="0.7" height="1.1" fill="#7fbf95"/><rect x="8.3" y="49.2" width="0.7" height="1.1" fill="#2d8d52"/><rect x="5.6" y="6.8" width="0.7" height="0.8" fill="#4aa06a"/><rect x="15.0" y="58.9" width="1.0" height="1.0" fill="#4aa06a"/><rect x="7.7" y="74.4" width="1.1" height="0.8" fill="#7fbf95"/><rect x="28.2" y="69.0" width="0.9" height="0.6" fill="#4aa06a"/><rect x="31.8" y="61.2" width="0.8" height="0.6" fill="#2d8d52"/><rect x="26.1" y="31.8" width="0.9" height="0.6" fill="#2d8d52"/><rect x="24.9" y="63.4" width="0.6" height="0.8" fill="#7fbf95"/><rect x="23.9" y="61.9" width="0.7" height="1.1" fill="#4aa06a"/><rect x="19.5" y="57.0" width="1.0" height="0.9" fill="#2d8d52"/><rect x="6.1" y="31.5" width="0.6" height="1.1" fill="#4aa06a"/><rect x="17.2" y="50.8" width="0.7" height="0.9" fill="#2d8d52"/><rect x="13.7" y="45.4" width="0.6" height="0.8" fill="#0e5a2d"/><rect x="13.9" y="26.4" width="0.7" height="1.0" fill="#4aa06a"/><rect x="15.8" y="23.4" width="0.6" height="1.0" fill="#7fbf95"/><rect x="16.5" y="9.7" width="0.8" height="1.0" fill="#4aa06a"/><rect x="27.8" y="41.3" width="1.1" height="0.8" fill="#0e5a2d"/><rect x="20.6" y="67.7" width="0.6" height="1.1" fill="#7fbf95"/><rect x="28.7" y="61.7" width="0.7" height="0.5" fill="#7fbf95"/><rect x="22.4" y="54.2" width="0.9" height="0.7" fill="#2d8d52"/><rect x="17.1" y="19.3" width="0.8" height="0.8" fill="#0e5a2d"/><rect x="32.2" y="42.7" width="0.8" height="1.0" fill="#0e5a2d"/><rect x="22.3" y="61.7" width="0.7" height="0.6" fill="#0e5a2d"/><rect x="21.5" y="41.2" width="1.0" height="0.8" fill="#4aa06a"/><rect x="5.7" y="33.2" width="1.0" height="0.6" fill="#2d8d52"/><rect x="4.8" y="36.6" width="0.5" height="0.6" fill="#4aa06a"/><rect x="8.1" y="38.2" width="1.0" height="0.5" fill="#0e5a2d"/><rect x="11.5" y="14.1" width="0.5" height="0.9" fill="#2d8d52"/><rect x="7.3" y="54.4" width="1.1" height="1.0" fill="#0e5a2d"/><rect x="14.2" y="42.7" width="1.0" height="0.9" fill="#0e5a2d"/><rect x="16.5" y="10.7" width="0.9" height="0.9" fill="#7fbf95"/><rect x="25.1" y="36.9" width="0.5" height="0.8" fill="#0e5a2d"/><rect x="12.4" y="3.4" width="0.9" height="0.8" fill="#4aa06a"/><rect x="26.1" y="15.3" width="1.0" height="0.7" fill="#4aa06a"/><rect x="5" y="3.5" width="20" height="1.2" fill="#7fbf95"/><rect x="28" y="9.0" width="3" height="1.6" fill="#0f3d22"/><rect x="28" y="14.2" width="3" height="1.6" fill="#0f3d22"/><rect x="28" y="19.4" width="3" height="1.6" fill="#0f3d22"/><rect x="28" y="24.6" width="3" height="1.6" fill="#0f3d22"/><rect x="28" y="29.8" width="3" height="1.6" fill="#0f3d22"/><rect x="28" y="35.0" width="3" height="1.6" fill="#0f3d22"/><rect x="28" y="40.2" width="3" height="1.6" fill="#0f3d22"/><rect x="28" y="45.4" width="3" height="1.6" fill="#0f3d22"/><rect x="28" y="50.6" width="3" height="1.6" fill="#0f3d22"/><rect x="28" y="55.800000000000004" width="3" height="1.6" fill="#0f3d22"/><rect x="28" y="61.0" width="3" height="1.6" fill="#0f3d22"/><rect x="28" y="66.2" width="3" height="1.6" fill="#0f3d22"/><rect x="28" y="71.4" width="3" height="1.6" fill="#0f3d22"/><rect x="9" y="76" width="1.8" height="5" fill="#3a3a3a"/><rect x="14" y="77" width="1.8" height="4" fill="#555"/><rect x="33" y="60" width="2" height="16" fill="#7a7a7a"/></svg>
<div class="abs" style="left:196px;top:533.0px;width:10px;height:10px;border:1px solid #dcdfe6;border-radius:2px;background:#fff"></div>
<div class="abs" style="left:214.3px;top:530.5px;width:27.899999999999977px;height:14px;line-height:14px;text-align:center;white-space:nowrap;font-size:10.5px;color:#606266">2</div>
<div class="abs" style="left:322.4px;top:531.5px;width:115.0px;height:14px;line-height:14px;text-align:center;white-space:nowrap;font-size:10px;color:#606266"><span style="color:#f00">[返单]</span> <span style="letter-spacing:-0.3px">SCYB2510530</span></div>
<div class="abs" style="left:437.4px;top:531.5px;width:113.20000000000005px;height:14px;line-height:14px;text-align:center;white-space:nowrap;font-size:10px;color:#606266;letter-spacing:0.1px">2025-06-21 09:45</div>
<div class="abs" style="left:550.6px;top:531.5px;width:114.0px;height:14px;line-height:14px;text-align:center;white-space:nowrap;font-size:10px;color:#606266">系统</div>
<div class="abs" style="left:664.6px;top:531.5px;width:47.799999999999955px;height:14px;line-height:14px;text-align:center;white-space:nowrap;font-size:10px;color:#f00;font-weight:bold">是</div>
<div class="abs" style="left:760.1px;top:531.5px;width:114.0px;height:14px;line-height:14px;text-align:center;white-space:nowrap;font-size:10px;color:#0a820a">确认OK</div>
<div class="abs" style="left:874.1px;top:531.5px;width:113.60000000000002px;height:14px;line-height:14px;text-align:center;white-space:nowrap;font-size:10px;color:#0a820a">确认OK</div>
<div class="abs" style="left:987.7px;top:531.5px;width:113.20000000000005px;height:14px;line-height:14px;text-align:center;white-space:nowrap;font-size:10px;color:#606266">王丽梅</div>
<div class="abs" style="left:1100.9px;top:531.5px;width:113.19999999999982px;height:14px;line-height:14px;text-align:center;white-space:nowrap;font-size:10px;color:#606266;letter-spacing:0.23px">2025-06-19 20:26</div>
<div class="abs" style="left:1555.7px;top:531.5px;width:47.299999999999955px;height:14px;line-height:14px;text-align:center;white-space:nowrap;font-size:11px;color:#409eff">下载</div>
<svg class="abs" style="left:264px;top:588.2px" width="38" height="12.6" viewBox="0 0 38 12.6"><rect width="38" height="12.6" fill="#dad6d2"/><rect x="1.5" y="4.5" width="35" height="5" fill="#3e8c5a"/><rect x="19.7" y="8.2" width="1.2" height="0.7" fill="#9fcfb0"/><rect x="25.9" y="7.6" width="0.6" height="0.5" fill="#255e3c"/><rect x="29.7" y="6.7" width="1.1" height="1.1" fill="#9fcfb0"/><rect x="30.8" y="8.8" width="0.8" height="1.2" fill="#79b98f"/><rect x="6.8" y="8.2" width="0.6" height="1.1" fill="#9fcfb0"/><rect x="21.0" y="8.8" width="0.6" height="0.9" fill="#9fcfb0"/><rect x="23.7" y="6.2" width="0.6" height="1.2" fill="#255e3c"/><rect x="23.8" y="7.4" width="1.0" height="0.8" fill="#9fcfb0"/><rect x="33.3" y="5.1" width="0.8" height="0.5" fill="#9fcfb0"/><rect x="14.1" y="8.8" width="0.8" height="1.0" fill="#255e3c"/><rect x="10.1" y="7.2" width="1.2" height="0.9" fill="#255e3c"/><rect x="4.0" y="5.3" width="0.7" height="1.0" fill="#9fcfb0"/><rect x="20.1" y="8.6" width="0.7" height="0.7" fill="#255e3c"/><rect x="12.8" y="6.3" width="1.1" height="0.9" fill="#255e3c"/><rect x="13.4" y="5.2" width="1.2" height="0.5" fill="#9fcfb0"/><rect x="11.3" y="7.5" width="1.0" height="0.7" fill="#79b98f"/><rect x="27.4" y="7.9" width="0.8" height="0.9" fill="#9fcfb0"/><rect x="25.3" y="6.6" width="1.0" height="1.2" fill="#9fcfb0"/><rect x="29.8" y="5.7" width="1.2" height="1.2" fill="#9fcfb0"/><rect x="5.8" y="5.8" width="1.1" height="0.9" fill="#255e3c"/><rect x="29.6" y="5.2" width="1.1" height="0.6" fill="#255e3c"/><rect x="30.5" y="7.6" width="0.8" height="0.6" fill="#79b98f"/><rect x="20.5" y="8.9" width="0.7" height="1.2" fill="#9fcfb0"/><rect x="7.6" y="6.2" width="1.0" height="0.8" fill="#255e3c"/><rect x="30.0" y="5.9" width="0.8" height="0.9" fill="#79b98f"/><rect x="8" y="3.2" width="6" height="2.2" fill="#2c3a32"/><rect x="24" y="3.2" width="6" height="2.2" fill="#2c3a32"/><rect x="31" y="3.8" width="3" height="3" fill="#3f7fc0"/></svg>
<div class="abs" style="left:196px;top:594.0px;width:10px;height:10px;border:1px solid #dcdfe6;border-radius:2px;background:#fff"></div>
<div class="abs" style="left:214.3px;top:591.5px;width:27.899999999999977px;height:14px;line-height:14px;text-align:center;white-space:nowrap;font-size:10.5px;color:#606266">3</div>
<div class="abs" style="left:322.4px;top:592.5px;width:115.0px;height:14px;line-height:14px;text-align:center;white-space:nowrap;font-size:10px;color:#606266"><span style="color:#f00">[返单]</span> <span style="letter-spacing:-0.3px">SCYB2510530</span></div>
<div class="abs" style="left:437.4px;top:592.5px;width:113.20000000000005px;height:14px;line-height:14px;text-align:center;white-space:nowrap;font-size:10px;color:#606266;letter-spacing:0.1px">2025-06-21 09:45</div>
<div class="abs" style="left:550.6px;top:592.5px;width:114.0px;height:14px;line-height:14px;text-align:center;white-space:nowrap;font-size:10px;color:#606266">系统</div>
<div class="abs" style="left:664.6px;top:592.5px;width:47.799999999999955px;height:14px;line-height:14px;text-align:center;white-space:nowrap;font-size:10px;color:#f00;font-weight:bold">是</div>
<div class="abs" style="left:760.1px;top:592.5px;width:114.0px;height:14px;line-height:14px;text-align:center;white-space:nowrap;font-size:10px;color:#0a820a">确认OK</div>
<div class="abs" style="left:874.1px;top:592.5px;width:113.60000000000002px;height:14px;line-height:14px;text-align:center;white-space:nowrap;font-size:10px;color:#0a820a">确认OK</div>
<div class="abs" style="left:987.7px;top:592.5px;width:113.20000000000005px;height:14px;line-height:14px;text-align:center;white-space:nowrap;font-size:10px;color:#606266">王丽梅</div>
<div class="abs" style="left:1100.9px;top:592.5px;width:113.19999999999982px;height:14px;line-height:14px;text-align:center;white-space:nowrap;font-size:10px;color:#606266;letter-spacing:0.23px">2025-06-19 20:26</div>
<div class="abs" style="left:1555.7px;top:592.5px;width:47.299999999999955px;height:14px;line-height:14px;text-align:center;white-space:nowrap;font-size:11px;color:#409eff">下载</div>
<svg class="abs" style="left:264px;top:616px" width="38" height="14.5" viewBox="0 0 38 14.5"><rect width="38" height="14.5" fill="#d8d5d1"/><rect x="1" y="3.5" width="36" height="7.5" fill="#3c8d58"/><rect x="26.2" y="9.5" width="0.6" height="1.3" fill="#255e3c"/><rect x="7.8" y="8.4" width="1.1" height="1.3" fill="#9fcfb0"/><rect x="26.6" y="9.0" width="0.9" height="1.2" fill="#79b98f"/><rect x="3.0" y="5.1" width="0.9" height="1.2" fill="#9fcfb0"/><rect x="19.0" y="10.5" width="1.0" height="0.7" fill="#255e3c"/><rect x="25.2" y="10.2" width="0.6" height="1.0" fill="#79b98f"/><rect x="33.4" y="6.1" width="1.2" height="0.6" fill="#79b98f"/><rect x="10.4" y="7.9" width="0.6" height="1.2" fill="#6a7a70"/><rect x="31.2" y="5.7" width="1.1" height="1.2" fill="#79b98f"/><rect x="21.6" y="9.1" width="1.0" height="0.8" fill="#255e3c"/><rect x="24.8" y="10.3" width="0.6" height="0.9" fill="#255e3c"/><rect x="20.1" y="5.6" width="1.0" height="0.7" fill="#255e3c"/><rect x="15.3" y="9.2" width="0.8" height="0.9" fill="#9fcfb0"/><rect x="10.5" y="5.2" width="1.0" height="0.8" fill="#255e3c"/><rect x="32.8" y="4.2" width="1.2" height="1.1" fill="#6a7a70"/><rect x="17.3" y="9.0" width="0.5" height="1.3" fill="#6a7a70"/><rect x="29.6" y="7.5" width="1.0" height="0.8" fill="#6a7a70"/><rect x="30.5" y="5.8" width="0.8" height="0.6" fill="#79b98f"/><rect x="29.1" y="8.2" width="0.5" height="0.7" fill="#79b98f"/><rect x="25.5" y="6.7" width="1.0" height="1.2" fill="#9fcfb0"/><rect x="17.3" y="8.4" width="0.8" height="1.2" fill="#79b98f"/><rect x="15.5" y="4.1" width="0.9" height="0.6" fill="#255e3c"/><rect x="30.7" y="7.4" width="1.2" height="0.7" fill="#6a7a70"/><rect x="6.5" y="9.4" width="0.6" height="0.6" fill="#255e3c"/><rect x="33.8" y="7.6" width="1.1" height="0.5" fill="#9fcfb0"/><rect x="29.0" y="4.7" width="0.6" height="0.6" fill="#79b98f"/><rect x="22.3" y="7.4" width="0.9" height="0.7" fill="#6a7a70"/><rect x="17.7" y="6.5" width="1.2" height="1.0" fill="#255e3c"/><rect x="13.6" y="5.2" width="0.6" height="0.6" fill="#9fcfb0"/><rect x="11.6" y="9.7" width="0.7" height="1.0" fill="#255e3c"/><rect x="9" y="5.5" width="9" height="2.5" fill="#4a5850"/><rect x="3" y="6" width="2.5" height="2" fill="#3f7fc0"/><rect x="33" y="0.5" width="1.8" height="2" fill="#222"/></svg>
<div class="abs" style="left:196px;top:622.0px;width:10px;height:10px;border:1px solid #dcdfe6;border-radius:2px;background:#fff"></div>
<div class="abs" style="left:214.3px;top:619.5px;width:27.899999999999977px;height:14px;line-height:14px;text-align:center;white-space:nowrap;font-size:10.5px;color:#606266">4</div>
<div class="abs" style="left:322.4px;top:620.5px;width:115.0px;height:14px;line-height:14px;text-align:center;white-space:nowrap;font-size:10px;color:#606266"><span style="color:#f00">[返单]</span> <span style="letter-spacing:-0.3px">SCYB2510530</span></div>
<div class="abs" style="left:437.4px;top:620.5px;width:113.20000000000005px;height:14px;line-height:14px;text-align:center;white-space:nowrap;font-size:10px;color:#606266;letter-spacing:0.1px">2025-06-21 09:45</div>
<div class="abs" style="left:550.6px;top:620.5px;width:114.0px;height:14px;line-height:14px;text-align:center;white-space:nowrap;font-size:10px;color:#606266">系统</div>
<div class="abs" style="left:664.6px;top:620.5px;width:47.799999999999955px;height:14px;line-height:14px;text-align:center;white-space:nowrap;font-size:10px;color:#f00;font-weight:bold">是</div>
<div class="abs" style="left:760.1px;top:620.5px;width:114.0px;height:14px;line-height:14px;text-align:center;white-space:nowrap;font-size:10px;color:#0a820a">确认OK</div>
<div class="abs" style="left:874.1px;top:620.5px;width:113.60000000000002px;height:14px;line-height:14px;text-align:center;white-space:nowrap;font-size:10px;color:#0a820a">确认OK</div>
<div class="abs" style="left:987.7px;top:620.5px;width:113.20000000000005px;height:14px;line-height:14px;text-align:center;white-space:nowrap;font-size:10px;color:#606266">王丽梅</div>
<div class="abs" style="left:1100.9px;top:620.5px;width:113.19999999999982px;height:14px;line-height:14px;text-align:center;white-space:nowrap;font-size:10px;color:#606266;letter-spacing:0.23px">2025-06-19 20:26</div>
<div class="abs" style="left:1555.7px;top:620.5px;width:47.299999999999955px;height:14px;line-height:14px;text-align:center;white-space:nowrap;font-size:11px;color:#409eff">下载</div>
<svg class="abs" style="left:264px;top:643px" width="38" height="22.5" viewBox="0 0 38 22.5"><rect width="38" height="22.5" fill="#e6e6e6"/><path d="M2 20.0L5 3H31L35 21.0Z" fill="#2e9453"/><rect x="6.3" y="5.7" width="0.8" height="1.0" fill="#1f6a3c"/><rect x="29.8" y="12.3" width="1.1" height="0.6" fill="#7cc497"/><rect x="22.6" y="6.1" width="0.9" height="0.9" fill="#4a5a50"/><rect x="11.1" y="13.2" width="0.6" height="1.1" fill="#4a5a50"/><rect x="14.5" y="7.2" width="0.8" height="1.0" fill="#1f6a3c"/><rect x="11.3" y="7.4" width="1.0" height="0.9" fill="#7cc497"/><rect x="27.0" y="9.5" width="0.7" height="1.2" fill="#4a5a50"/><rect x="6.8" y="15.4" width="1.2" height="1.0" fill="#1f6a3c"/><rect x="11.2" y="10.7" width="0.8" height="0.8" fill="#1f6a3c"/><rect x="18.1" y="8.1" width="0.7" height="1.0" fill="#4a5a50"/><rect x="22.2" y="17.0" width="1.3" height="1.3" fill="#7cc497"/><rect x="25.7" y="8.7" width="0.6" height="1.0" fill="#a7d8b8"/><rect x="8.3" y="7.0" width="1.2" height="1.0" fill="#7cc497"/><rect x="22.7" y="8.4" width="0.7" height="1.2" fill="#1f6a3c"/><rect x="8.8" y="7.1" width="0.8" height="0.8" fill="#7cc497"/><rect x="20.0" y="5.8" width="0.6" height="1.3" fill="#7cc497"/><rect x="30.0" y="7.1" width="0.6" height="1.3" fill="#1f6a3c"/><rect x="17.9" y="11.7" width="1.1" height="0.7" fill="#a7d8b8"/><rect x="30.5" y="11.6" width="1.0" height="1.2" fill="#4a5a50"/><rect x="9.4" y="15.2" width="1.1" height="1.3" fill="#7cc497"/><rect x="12.4" y="15.9" width="1.3" height="0.8" fill="#7cc497"/><rect x="8.4" y="13.0" width="0.9" height="1.3" fill="#1f6a3c"/><rect x="9.1" y="17.4" width="0.5" height="1.0" fill="#1f6a3c"/><rect x="25.7" y="18.7" width="1.2" height="1.1" fill="#4a5a50"/><rect x="20.0" y="12.0" width="1.1" height="0.9" fill="#1f6a3c"/><rect x="19.1" y="15.1" width="0.9" height="1.1" fill="#4a5a50"/><rect x="14.1" y="9.8" width="0.9" height="0.8" fill="#1f6a3c"/><rect x="29.6" y="14.7" width="1.0" height="0.6" fill="#7cc497"/><rect x="24.3" y="7.2" width="0.7" height="1.2" fill="#1f6a3c"/><rect x="16.6" y="15.0" width="0.9" height="0.7" fill="#a7d8b8"/><rect x="24.4" y="16.8" width="0.5" height="1.0" fill="#a7d8b8"/><rect x="12.5" y="7.1" width="1.2" height="0.8" fill="#4a5a50"/><rect x="6.8" y="10.9" width="1.1" height="0.7" fill="#a7d8b8"/><rect x="14.6" y="14.8" width="0.8" height="1.1" fill="#7cc497"/><rect x="30.2" y="17.7" width="1.1" height="1.2" fill="#4a5a50"/><rect x="29.4" y="8.3" width="0.6" height="0.5" fill="#4a5a50"/><rect x="9.9" y="16.5" width="1.2" height="1.3" fill="#a7d8b8"/><rect x="15.5" y="15.7" width="0.7" height="1.2" fill="#a7d8b8"/><rect x="16.1" y="16.0" width="0.7" height="1.0" fill="#a7d8b8"/><rect x="27.2" y="14.4" width="1.1" height="0.5" fill="#4a5a50"/><rect x="29.5" y="14.4" width="0.9" height="1.2" fill="#a7d8b8"/><rect x="25.8" y="10.2" width="0.7" height="1.2" fill="#4a5a50"/><rect x="7.2" y="12.8" width="1.3" height="0.7" fill="#4a5a50"/><rect x="23.1" y="9.0" width="1.3" height="1.1" fill="#7cc497"/><rect x="14.2" y="15.3" width="1.1" height="0.8" fill="#7cc497"/><rect x="8" y="4" width="5" height="6" fill="#24352a"/><rect x="12" y="9" width="3" height="4" fill="#2c3a30"/><rect x="17" y="3" width="3" height="3" fill="#3f7fc0"/><path d="M30 1L32 1L35 20.5L33 20.5Z" fill="#9aa0a6"/></svg>
<div class="abs" style="left:196px;top:651.0px;width:10px;height:10px;border:1px solid #dcdfe6;border-radius:2px;background:#fff"></div>
<div class="abs" style="left:214.3px;top:648.5px;width:27.899999999999977px;height:14px;line-height:14px;text-align:center;white-space:nowrap;font-size:10.5px;color:#606266">5</div>
<div class="abs" style="left:322.4px;top:649.5px;width:115.0px;height:14px;line-height:14px;text-align:center;white-space:nowrap;font-size:10px;color:#606266"><span style="color:#f00">[返单]</span> <span style="letter-spacing:-0.3px">SCYB2510530</span></div>
<div class="abs" style="left:437.4px;top:649.5px;width:113.20000000000005px;height:14px;line-height:14px;text-align:center;white-space:nowrap;font-size:10px;color:#606266;letter-spacing:0.1px">2025-06-21 09:45</div>
<div class="abs" style="left:550.6px;top:649.5px;width:114.0px;height:14px;line-height:14px;text-align:center;white-space:nowrap;font-size:10px;color:#606266">系统</div>
<div class="abs" style="left:664.6px;top:649.5px;width:47.799999999999955px;height:14px;line-height:14px;text-align:center;white-space:nowrap;font-size:10px;color:#f00;font-weight:bold">是</div>
<div class="abs" style="left:760.1px;top:649.5px;width:114.0px;height:14px;line-height:14px;text-align:center;white-space:nowrap;font-size:10px;color:#0a820a">确认OK</div>
<div class="abs" style="left:874.1px;top:649.5px;width:113.60000000000002px;height:14px;line-height:14px;text-align:center;white-space:nowrap;font-size:10px;color:#0a820a">确认OK</div>
<div class="abs" style="left:987.7px;top:649.5px;width:113.20000000000005px;height:14px;line-height:14px;text-align:center;white-space:nowrap;font-size:10px;color:#606266">王丽梅</div>
<div class="abs" style="left:1100.9px;top:649.5px;width:113.19999999999982px;height:14px;line-height:14px;text-align:center;white-space:nowrap;font-size:10px;color:#606266;letter-spacing:0.23px">2025-06-19 20:26</div>
<div class="abs" style="left:1555.7px;top:649.5px;width:47.299999999999955px;height:14px;line-height:14px;text-align:center;white-space:nowrap;font-size:11px;color:#409eff">下载</div>
<svg class="abs" style="left:264px;top:675px" width="38" height="86" viewBox="0 0 38 86"><rect width="38" height="86" fill="#17a04c"/><rect x="21.5" y="37.0" width="1.0" height="0.5" fill="#b9e3c6"/><rect x="15.8" y="4.7" width="1.0" height="0.9" fill="#0f7a38"/><rect x="9.5" y="28.7" width="1.0" height="0.8" fill="#b9e3c6"/><rect x="13.8" y="79.4" width="0.6" height="0.8" fill="#0f7a38"/><rect x="17.9" y="2.0" width="0.8" height="0.9" fill="#b9e3c6"/><rect x="28.6" y="84.4" width="0.9" height="0.6" fill="#6cc58b"/><rect x="9.0" y="63.8" width="1.1" height="0.6" fill="#0f7a38"/><rect x="10.4" y="16.4" width="0.8" height="0.8" fill="#0f7a38"/><rect x="21.4" y="16.0" width="0.7" height="1.0" fill="#b9e3c6"/><rect x="12.9" y="21.1" width="1.0" height="0.7" fill="#b9e3c6"/><rect x="32.7" y="13.3" width="1.1" height="1.1" fill="#6cc58b"/><rect x="26.5" y="71.8" width="0.5" height="1.0" fill="#b9e3c6"/><rect x="27.5" y="63.0" width="1.1" height="1.1" fill="#b9e3c6"/><rect x="32.8" y="19.6" width="0.6" height="0.8" fill="#b9e3c6"/><rect x="3.1" y="51.3" width="0.5" height="0.8" fill="#6cc58b"/><rect x="5.7" y="12.8" width="0.9" height="1.0" fill="#b9e3c6"/><rect x="22.7" y="62.4" width="0.6" height="0.7" fill="#0f7a38"/><rect x="21.7" y="3.3" width="0.6" height="1.0" fill="#b9e3c6"/><rect x="32.7" y="24.8" width="0.6" height="0.6" fill="#b9e3c6"/><rect x="10.6" y="21.2" width="0.5" height="0.9" fill="#6cc58b"/><rect x="18.1" y="38.2" width="0.8" height="1.0" fill="#6cc58b"/><rect x="25.7" y="22.8" width="0.8" height="0.9" fill="#0f7a38"/><rect x="11.1" y="19.1" width="0.9" height="0.6" fill="#b9e3c6"/><rect x="11.4" y="24.6" width="0.6" height="1.0" fill="#6cc58b"/><rect x="7.8" y="27.0" width="1.2" height="1.2" fill="#6cc58b"/><rect x="12.7" y="36.7" width="0.5" height="0.9" fill="#0f7a38"/><rect x="21.2" y="79.9" width="0.6" height="0.9" fill="#0f7a38"/><rect x="4.4" y="73.8" width="0.9" height="1.1" fill="#0f7a38"/><rect x="28.5" y="9.6" width="1.1" height="0.5" fill="#b9e3c6"/><rect x="17.2" y="28.6" width="0.8" height="0.7" fill="#0f7a38"/><rect x="5.0" y="37.2" width="1.2" height="1.0" fill="#0f7a38"/><rect x="8.5" y="49.6" width="1.2" height="0.8" fill="#6cc58b"/><rect x="27.8" y="39.5" width="1.2" height="0.7" fill="#6cc58b"/><rect x="31.7" y="61.1" width="1.2" height="1.1" fill="#0f7a38"/><rect x="30.0" y="26.6" width="0.7" height="0.6" fill="#0f7a38"/><rect x="1.1" y="1.4" width="0.9" height="0.7" fill="#b9e3c6"/><rect x="27.4" y="13.0" width="0.5" height="1.1" fill="#6cc58b"/><rect x="24.7" y="6.7" width="1.1" height="1.0" fill="#b9e3c6"/><rect x="22.8" y="84.5" width="0.7" height="0.5" fill="#6cc58b"/><rect x="6.2" y="77.3" width="1.0" height="1.2" fill="#b9e3c6"/><rect x="7.7" y="11.3" width="0.7" height="1.1" fill="#6cc58b"/><rect x="32.9" y="43.2" width="1.0" height="0.8" fill="#b9e3c6"/><rect x="2.2" y="39.4" width="1.0" height="0.6" fill="#0f7a38"/><rect x="31.8" y="1.3" width="1.1" height="0.6" fill="#b9e3c6"/><rect x="17.9" y="23.5" width="1.2" height="1.0" fill="#6cc58b"/><rect x="1.4" y="27.9" width="1.1" height="0.6" fill="#b9e3c6"/><rect x="32.2" y="33.0" width="0.9" height="0.6" fill="#0f7a38"/><rect x="7.1" y="48.7" width="0.9" height="0.9" fill="#0f7a38"/><rect x="19.9" y="58.8" width="1.2" height="1.2" fill="#6cc58b"/><rect x="3.3" y="84.9" width="0.7" height="1.2" fill="#6cc58b"/><rect x="6.1" y="56.4" width="0.9" height="0.7" fill="#b9e3c6"/><rect x="30.0" y="29.5" width="1.2" height="1.2" fill="#0f7a38"/><rect x="25.8" y="9.6" width="1.2" height="0.7" fill="#6cc58b"/><rect x="32.8" y="28.3" width="0.9" height="0.5" fill="#b9e3c6"/><rect x="29.0" y="13.7" width="0.6" height="0.9" fill="#6cc58b"/><rect x="18.1" y="76.0" width="0.8" height="0.7" fill="#6cc58b"/><rect x="18.8" y="71.7" width="0.5" height="1.1" fill="#0f7a38"/><rect x="28.4" y="40.8" width="1.1" height="0.7" fill="#0f7a38"/><rect x="15.5" y="84.7" width="0.6" height="1.2" fill="#b9e3c6"/><rect x="5.6" y="56.5" width="0.7" height="0.5" fill="#b9e3c6"/><rect x="24" y="3" width="7" height="7" fill="#3a4640"/><circle cx="9" cy="11" r="2.2" fill="#6fc58c"/><circle cx="9" cy="11" r="0.8" fill="#3a4"/><rect x="33" y="0" width="5" height="30" fill="#5cb97f"/><rect x="34" y="36" width="4" height="48" fill="#1f2722"/><circle cx="26" cy="38" r="3" fill="#7d83b5"/><circle cx="25" cy="62" r="3.2" fill="#c0a49a"/><circle cx="25" cy="72" r="3.3" fill="#2a2a2a"/><rect x="8" y="32" width="3.5" height="3" fill="#b08f73"/><rect x="8" y="60" width="3.5" height="3" fill="#b08f73"/><rect x="14" y="56" width="5" height="4" fill="#d8dcd8"/><rect x="13" y="25" width="3" height="3" fill="#c49a3a"/><rect x="24" y="18" width="3" height="3" fill="#2b3a30"/></svg>
<div class="abs" style="left:196px;top:715.0px;width:10px;height:10px;border:1px solid #dcdfe6;border-radius:2px;background:#fff"></div>
<div class="abs" style="left:214.3px;top:712.5px;width:27.899999999999977px;height:14px;line-height:14px;text-align:center;white-space:nowrap;font-size:10.5px;color:#606266">6</div>
<div class="abs" style="left:322.4px;top:713.5px;width:115.0px;height:14px;line-height:14px;text-align:center;white-space:nowrap;font-size:10px;color:#606266"><span style="color:#f00">[返单]</span> <span style="letter-spacing:-0.3px">SCYB2510530</span></div>
<div class="abs" style="left:437.4px;top:713.5px;width:113.20000000000005px;height:14px;line-height:14px;text-align:center;white-space:nowrap;font-size:10px;color:#606266;letter-spacing:0.1px">2025-06-21 09:45</div>
<div class="abs" style="left:550.6px;top:713.5px;width:114.0px;height:14px;line-height:14px;text-align:center;white-space:nowrap;font-size:10px;color:#606266">系统</div>
<div class="abs" style="left:664.6px;top:713.5px;width:47.799999999999955px;height:14px;line-height:14px;text-align:center;white-space:nowrap;font-size:10px;color:#f00;font-weight:bold">是</div>
<div class="abs" style="left:760.1px;top:713.5px;width:114.0px;height:14px;line-height:14px;text-align:center;white-space:nowrap;font-size:10px;color:#0a820a">确认OK</div>
<div class="abs" style="left:874.1px;top:713.5px;width:113.60000000000002px;height:14px;line-height:14px;text-align:center;white-space:nowrap;font-size:10px;color:#0a820a">确认OK</div>
<div class="abs" style="left:987.7px;top:713.5px;width:113.20000000000005px;height:14px;line-height:14px;text-align:center;white-space:nowrap;font-size:10px;color:#606266">王丽梅</div>
<div class="abs" style="left:1100.9px;top:713.5px;width:113.19999999999982px;height:14px;line-height:14px;text-align:center;white-space:nowrap;font-size:10px;color:#606266;letter-spacing:0.23px">2025-06-19 20:26</div>
<div class="abs" style="left:1555.7px;top:713.5px;width:47.299999999999955px;height:14px;line-height:14px;text-align:center;white-space:nowrap;font-size:11px;color:#409eff">下载</div>
<svg class="abs" style="left:264px;top:770px" width="38" height="86" viewBox="0 0 38 86"><rect width="38" height="86" fill="#16a04b"/><rect x="11.7" y="42.0" width="0.6" height="0.7" fill="#6cc58b"/><rect x="18.5" y="10.6" width="1.1" height="1.2" fill="#b9e3c6"/><rect x="23.8" y="76.5" width="0.5" height="0.7" fill="#b9e3c6"/><rect x="7.9" y="84.4" width="1.0" height="0.8" fill="#b9e3c6"/><rect x="16.1" y="59.8" width="1.1" height="0.6" fill="#0f7a38"/><rect x="14.4" y="61.9" width="0.7" height="0.8" fill="#6cc58b"/><rect x="27.0" y="27.6" width="0.8" height="1.1" fill="#b9e3c6"/><rect x="20.0" y="46.1" width="0.9" height="0.9" fill="#b9e3c6"/><rect x="23.6" y="50.8" width="0.5" height="1.1" fill="#6cc58b"/><rect x="14.2" y="53.6" width="0.5" height="0.8" fill="#b9e3c6"/><rect x="16.6" y="18.6" width="0.8" height="0.8" fill="#b9e3c6"/><rect x="17.6" y="8.3" width="0.8" height="1.1" fill="#b9e3c6"/><rect x="31.9" y="53.4" width="0.9" height="0.9" fill="#0f7a38"/><rect x="13.2" y="15.1" width="0.5" height="0.7" fill="#0f7a38"/><rect x="33.2" y="9.6" width="0.9" height="0.9" fill="#0f7a38"/><rect x="22.8" y="39.2" width="0.6" height="0.7" fill="#6cc58b"/><rect x="23.6" y="44.6" width="1.0" height="0.8" fill="#6cc58b"/><rect x="34.7" y="51.2" width="0.7" height="0.8" fill="#6cc58b"/><rect x="22.5" y="66.9" width="1.1" height="0.5" fill="#6cc58b"/><rect x="34.3" y="67.8" width="0.6" height="1.0" fill="#b9e3c6"/><rect x="27.1" y="38.5" width="1.1" height="0.8" fill="#0f7a38"/><rect x="15.2" y="34.8" width="0.8" height="1.0" fill="#6cc58b"/><rect x="5.3" y="50.6" width="1.1" height="1.0" fill="#6cc58b"/><rect x="13.3" y="37.8" width="0.9" height="1.1" fill="#0f7a38"/><rect x="32.5" y="46.3" width="0.5" height="0.8" fill="#6cc58b"/><rect x="30.8" y="54.8" width="1.1" height="1.0" fill="#b9e3c6"/><rect x="24.3" y="20.6" width="0.9" height="1.1" fill="#6cc58b"/><rect x="4.6" y="53.2" width="0.8" height="1.0" fill="#0f7a38"/><rect x="33.1" y="68.5" width="1.1" height="0.8" fill="#6cc58b"/><rect x="25.9" y="35.0" width="1.0" height="1.0" fill="#0f7a38"/><rect x="21.1" y="33.4" width="1.1" height="0.5" fill="#0f7a38"/><rect x="33.5" y="23.3" width="1.1" height="0.6" fill="#0f7a38"/><rect x="10.0" y="35.1" width="1.0" height="1.0" fill="#b9e3c6"/><rect x="22.7" y="63.5" width="0.9" height="1.1" fill="#b9e3c6"/><rect x="20.2" y="12.4" width="1.0" height="0.7" fill="#6cc58b"/><rect x="26.1" y="82.9" width="1.0" height="0.7" fill="#b9e3c6"/><rect x="20.7" y="82.5" width="0.9" height="1.0" fill="#0f7a38"/><rect x="21.4" y="78.6" width="0.8" height="0.5" fill="#6cc58b"/><rect x="6.1" y="4.9" width="0.8" height="0.9" fill="#b9e3c6"/><rect x="13.8" y="38.1" width="0.9" height="0.9" fill="#0f7a38"/><rect x="11.7" y="2.0" width="0.8" height="0.8" fill="#0f7a38"/><rect x="20.1" y="20.8" width="0.6" height="1.1" fill="#b9e3c6"/><rect x="22.4" y="45.5" width="1.1" height="1.0" fill="#6cc58b"/><rect x="5.6" y="49.6" width="1.1" height="0.7" fill="#b9e3c6"/><rect x="13.8" y="82.1" width="1.1" height="0.8" fill="#b9e3c6"/><rect x="18.8" y="13.9" width="1.0" height="0.6" fill="#6cc58b"/><rect x="30.9" y="53.4" width="0.5" height="0.5" fill="#6cc58b"/><rect x="22.0" y="63.6" width="0.8" height="1.0" fill="#0f7a38"/><rect x="7.3" y="4.7" width="1.0" height="0.9" fill="#6cc58b"/><rect x="31.0" y="46.8" width="0.5" height="1.1" fill="#b9e3c6"/><rect x="19.5" y="45.7" width="1.0" height="0.6" fill="#b9e3c6"/><rect x="22.9" y="36.5" width="0.6" height="0.6" fill="#6cc58b"/><rect x="29.9" y="34.0" width="1.0" height="1.1" fill="#0f7a38"/><rect x="12.1" y="9.5" width="1.1" height="1.1" fill="#0f7a38"/><rect x="27.1" y="13.0" width="0.9" height="1.0" fill="#0f7a38"/><rect x="22.8" y="72.0" width="1.0" height="1.2" fill="#6cc58b"/><rect x="18.8" y="24.4" width="0.7" height="0.6" fill="#0f7a38"/><rect x="5.4" y="13.6" width="0.5" height="0.9" fill="#b9e3c6"/><rect x="30.8" y="80.3" width="1.2" height="0.6" fill="#b9e3c6"/><rect x="3.0" y="21.0" width="0.8" height="0.8" fill="#b9e3c6"/><rect x="0" y="0" width="3" height="42" fill="#1a1c1a"/><rect x="4" y="0" width="9" height="5" fill="#45b872"/><circle cx="8" cy="14" r="4" fill="#d3d4cc"/><circle cx="8" cy="14" r="2" fill="#555"/><rect x="14" y="32" width="6" height="12" fill="#2b3830"/><rect x="34" y="20" width="3" height="10" fill="#dfe3e0"/><rect x="34" y="46" width="3" height="10" fill="#dfe3e0"/><rect x="7" y="54" width="3" height="2" fill="#223"/><rect x="7" y="60" width="3" height="2" fill="#223"/><rect x="7" y="66" width="3" height="2" fill="#223"/><rect x="7" y="72" width="3" height="2" fill="#223"/><rect x="24" y="56" width="9" height="2.6" fill="#2f8fd6" transform="rotate(-20 28 57)"/><rect x="24" y="62" width="9" height="2.6" fill="#2f8fd6" transform="rotate(-20 28 63)"/><rect x="24" y="68" width="9" height="2.6" fill="#2f8fd6" transform="rotate(-20 28 69)"/><rect x="24" y="74" width="9" height="2.6" fill="#2f8fd6" transform="rotate(-20 28 75)"/><rect x="35" y="60" width="3" height="26" fill="#2aa85a"/></svg>
<div class="abs" style="left:196px;top:810.0px;width:10px;height:10px;border:1px solid #dcdfe6;border-radius:2px;background:#fff"></div>
<div class="abs" style="left:214.3px;top:807.5px;width:27.899999999999977px;height:14px;line-height:14px;text-align:center;white-space:nowrap;font-size:10.5px;color:#606266">7</div>
<div class="abs" style="left:322.4px;top:808.5px;width:115.0px;height:14px;line-height:14px;text-align:center;white-space:nowrap;font-size:10px;color:#606266"><span style="color:#f00">[返单]</span> <span style="letter-spacing:-0.3px">SCYB2510530</span></div>
<div class="abs" style="left:437.4px;top:808.5px;width:113.20000000000005px;height:14px;line-height:14px;text-align:center;white-space:nowrap;font-size:10px;color:#606266;letter-spacing:0.1px">2025-06-21 09:45</div>
<div class="abs" style="left:550.6px;top:808.5px;width:114.0px;height:14px;line-height:14px;text-align:center;white-space:nowrap;font-size:10px;color:#606266">系统</div>
<div class="abs" style="left:664.6px;top:808.5px;width:47.799999999999955px;height:14px;line-height:14px;text-align:center;white-space:nowrap;font-size:10px;color:#f00;font-weight:bold">是</div>
<div class="abs" style="left:760.1px;top:808.5px;width:114.0px;height:14px;line-height:14px;text-align:center;white-space:nowrap;font-size:10px;color:#0a820a">确认OK</div>
<div class="abs" style="left:874.1px;top:808.5px;width:113.60000000000002px;height:14px;line-height:14px;text-align:center;white-space:nowrap;font-size:10px;color:#0a820a">确认OK</div>
<div class="abs" style="left:987.7px;top:808.5px;width:113.20000000000005px;height:14px;line-height:14px;text-align:center;white-space:nowrap;font-size:10px;color:#606266">王丽梅</div>
<div class="abs" style="left:1100.9px;top:808.5px;width:113.19999999999982px;height:14px;line-height:14px;text-align:center;white-space:nowrap;font-size:10px;color:#606266;letter-spacing:0.23px">2025-06-19 20:26</div>
<div class="abs" style="left:1555.7px;top:808.5px;width:47.299999999999955px;height:14px;line-height:14px;text-align:center;white-space:nowrap;font-size:11px;color:#409eff">下载</div>
<svg class="abs" style="left:264px;top:865px" width="38" height="86" viewBox="0 0 38 86"><rect width="38" height="86" fill="#17a04c"/><rect x="3" y="1" width="4" height="2" fill="#2b3a30"/><rect x="20" y="1.5" width="5" height="1.5" fill="#6cc58b"/></svg>
<!-- scrollbars -->
<div class="abs" style="left:1624px;top:74px;width:4px;height:795px;background:#e6e6e6"></div>
<div class="abs" style="left:1624px;top:74px;width:4px;height:232px;background:#a8a8a8"></div>
<div class="abs" style="left:1628px;top:0;width:4px;height:869px;background:#dcdcdc"></div>
<div class="abs" style="left:1628px;top:0;width:4px;height:727px;background:#a8a8a8"></div>
<!-- translate widget -->
<div class="abs" style="left:1591px;top:406px;width:40px;height:31px;border-radius:16px 0 0 16px;background:#c3d3f7"></div>
<div class="abs" style="left:1602px;top:414.5px;width:17px;height:16.5px;border-radius:2px;background:#6f98f0;color:#fff;font-size:12px;line-height:16px;text-align:center">译</div>
<!-- blue float -->
<div class="abs" style="left:1596px;top:757px;width:32px;height:32px;border-radius:3px 0 0 3px;background:#409eff"></div>
<svg class="abs" style="left:1607px;top:767px" width="11" height="13" viewBox="0 0 11 13"><rect x="0.8" y="0.6" width="8.8" height="4.9" fill="#fff"/><path d="M0.6 6.2H9.8L8.6 7.6H1.8Z" fill="#fff"/><rect x="4.5" y="7.4" width="2.4" height="4.6" fill="#fff"/></svg>
<!-- watermark -->
<div class="t" style="left:1355px;top:778px;font-size:20px;color:rgba(120,120,120,0.45);letter-spacing:0.75px">激活 Windows</div>
<div class="t" style="left:1355px;top:803.5px;font-size:14.5px;color:rgba(120,120,120,0.45);letter-spacing:0.72px">转到“设置”以激活 Windows。</div>
</body></html>
